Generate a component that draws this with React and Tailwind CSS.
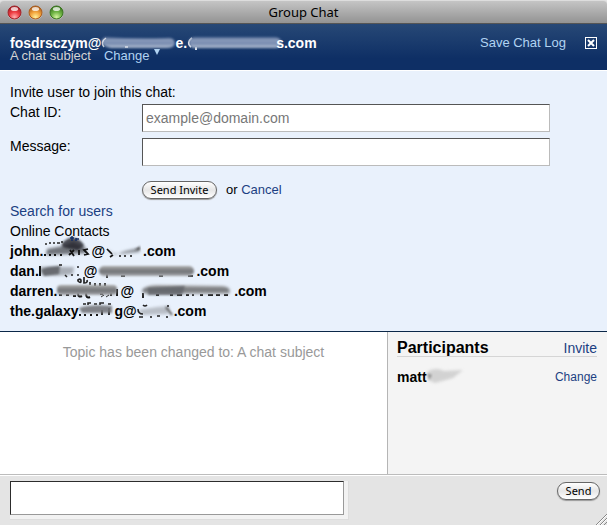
const sans = "font-['Liberation_Sans',Arial,sans-serif]";
const ui = "font-['Noto_Sans','Open_Sans',sans-serif]";

function Light({ id, dark, mid, pale }) {
  return (
    <svg className="size-[15px]" viewBox="0 0 15 15" aria-hidden="true">
      <defs>
        <radialGradient id={id} cx="50%" cy="85%" r="80%">
          <stop offset="0" stopColor={pale} />
          <stop offset="0.5" stopColor={mid} />
          <stop offset="1" stopColor={dark} />
        </radialGradient>
      </defs>
      <circle cx="7.5" cy="8" r="7" fill="#fff" opacity="0.35" />
      <circle cx="7.5" cy="7.5" r="6.5" fill={`url(#${id})`} stroke={dark} strokeWidth="1" />
      <ellipse cx="7.5" cy="4" rx="3.6" ry="2" fill="#fff" opacity="0.75" />
    </svg>
  );
}

function Smudge({ className, width, children }) {
  return (
    <svg className={`h-5 shrink-0 overflow-visible ${className}`} viewBox={`0 0 ${width} 20`} aria-hidden="true">
      {children}
    </svg>
  );
}

const pill =
  "shrink-0 rounded-full border border-[#666] bg-linear-to-b from-white via-[#e6e6e6] to-white text-[11px] leading-4 text-black shadow-[0_1px_1px_#999]";
const field =
  "min-w-0 flex-1 h-7 border border-t-[#555] border-l-[#555] border-r-[#bbb] border-b-[#bbb] bg-white px-[3px] text-sm outline-none placeholder:text-[#777]";

export default function App() {
  return (
    <div className={`flex min-h-screen w-full flex-col bg-[#e4e4e4] text-sm text-black ${sans}`}>
      <svg className="absolute size-0" aria-hidden="true">
        <defs>
          <filter id="soft" x="-20%" y="-40%" width="140%" height="180%"><feGaussianBlur stdDeviation="0.8" /></filter>
          <filter id="softer" x="-40%" y="-60%" width="180%" height="220%"><feGaussianBlur stdDeviation="1.8" /></filter>
          <linearGradient id="bar" x1="0" y1="0" x2="0" y2="1">
            <stop offset="0" stopColor="#aaa" />
            <stop offset="0.55" stopColor="#707276" />
            <stop offset="1" stopColor="#a7a9ac" />
          </linearGradient>
          <linearGradient id="bluebar" x1="0" y1="0" x2="0" y2="1">
            <stop offset="0" stopColor="#526b96" />
            <stop offset="0.3" stopColor="#8e9fbd" />
            <stop offset="0.55" stopColor="#7488ae" />
            <stop offset="1" stopColor="#b0bdd1" />
          </linearGradient>
        </defs>
      </svg>

      <header className="grid h-6 grid-cols-[1fr_auto_1fr] items-center rounded-t border-t border-b border-t-[#ddd] border-b-[#555] bg-linear-to-b from-[#c5c5c5] to-[#939393] px-[7px]">
        <div className="flex gap-[6px]">
          <Light id="red" dark="#a02027" mid="#ef3c42" pale="#ffb0b0" />
          <Light id="amber" dark="#a95c1d" mid="#f3a33b" pale="#fff09a" />
          <Light id="green" dark="#39741f" mid="#70b545" pale="#d6f5a0" />
        </div>
        <h1 className={`text-[13px] leading-5 ${ui}`}>Group Chat</h1>
      </header>

      <section className="flex h-[47px] items-start justify-between border-b border-white bg-linear-to-b from-[#274876] to-[#0e2f65] to-75% px-[10px] pt-[13px]">
        <div>
          <div className="flex h-3 items-center text-sm leading-3 font-bold text-white">
            <span>fosdrsczym@</span>
            <Smudge className="w-[74px]" width={74}>
              <path d="M4 4Q0 6 1 10Q3 14 10 15H65Q74 15 74 10Q73 4 65 5Q32 6 4 4Z" fill="url(#bluebar)" filter="url(#soft)" />
              <path d="M5 5Q-1 9 3 14M24 14h3" fill="none" stroke="#fff" strokeWidth="1.5" opacity="0.7" />
            </Smudge>
            <span>e.</span>
            <Smudge className="w-[89px]" width={89}>
              <path d="M5 5Q-1 10 4 14M9 14v3" fill="none" stroke="#fff" strokeWidth="1.8" />
              <rect x="2" y="4" width="92" height="11" rx="5.5" fill="url(#bluebar)" filter="url(#soft)" />
            </Smudge>
            <span>s.com</span>
          </div>
          <div className="flex h-4 gap-[13px] text-[13px] leading-[14px] text-[#d4d4d4]">
            <span>A chat subject</span>
            <button className="flex gap-1 text-[#b1d3f2]">
              Change
              <svg className="h-[7px] w-[6px]" viewBox="0 0 6 7" aria-hidden="true"><path d="M0 0h6L3 6z" fill="currentColor" /></svg>
            </button>
          </div>
        </div>
        <div className="flex items-center gap-[19px]">
          <a href="#save" className="text-[13px] leading-3 text-[#b1d3f2]">Save Chat Log</a>
          <button aria-label="Close chat">
            <svg className="size-3" viewBox="0 0 12 12" aria-hidden="true">
              <rect x="0.5" y="0.5" width="11" height="11" fill="none" stroke="#fff" />
              <path d="M3 3l6 6M9 3L3 9" stroke="#fff" strokeWidth="2" />
            </svg>
          </button>
        </div>
      </section>

      <section className="border-b border-[#0b2748] bg-[#e9f1fc] px-[10px] pt-[9px] pb-[10px]">
        <form onSubmit={(e) => e.preventDefault()}>
          <p className="leading-6">Invite user to join this chat:</p>
          <div className="mb-[6px] flex pr-[47px]">
            <label htmlFor="chat-id" className="w-[132px] leading-4">Chat ID:</label>
            <input id="chat-id" type="text" placeholder="example@domain.com" className={field} />
          </div>
          <div className="flex pr-[47px]">
            <label htmlFor="message" className="w-[132px] leading-4">Message:</label>
            <input id="message" type="text" className={field} />
          </div>
          <div className="mt-[15px] mb-[2px] flex h-[18px] items-center pl-[132px] text-[13px]">
            <button className={`w-[75px] ${pill} ${ui}`}>Send Invite</button>
            <span className="ml-[9px]">or&nbsp;</span>
            <a href="#cancel" className="text-[#1c3f82]">Cancel</a>
          </div>
        </form>
        <a href="#search" className="block leading-5 text-[#1c3f82]">Search for users</a>
        <h2 className="leading-5">Online Contacts</h2>
        <ul className="leading-5 font-bold">
          <li className="flex">
            <span>john.</span>
            <Smudge className="w-[48px]" width={48}>
              <path d="M4 8L20 5L30 1L42 6L44 12L30 13L3 14Z" fill="#71757b" filter="url(#softer)" />
              <path d="M19 2Q27-5 32-3Q40 0 41 5L35 9Q27 8 19 6Z" fill="#222429" filter="url(#soft)" opacity="0.8" />
              <path d="M2 3h2M6 2h2M10 2h2M14 2h3M18 1h2" stroke="#222" strokeWidth="1.5" />
              <path d="M29-5v5M27-3h4M33-3v3M33-2h3" fill="none" stroke="#142f66" strokeWidth="1.5" />
              <path d="M1 14h2M6 14h2M11 14h2M17 14h2M26 14l5-5M27 9l4 6M36 9v5M45 8l-4 1 4 4-4 1" fill="none" stroke="#111" strokeWidth="1.8" />
            </Smudge>
            <span>@</span>
            <Smudge className="w-[38px]" width={38}>
              <path d="M2 8L10 14L20 10L33 7L35 11L16 13L5 12Z" fill="#8d9299" filter="url(#softer)" />
              <path d="M2 8l5 5M5 16l3-2M14 15h2M19 15h2M25 15h2" stroke="#111" strokeWidth="1.7" />
              <path d="M30 9l5-4v4" fill="#444" filter="url(#soft)" />
            </Smudge>
            <span>.com</span>
          </li>
          <li className="flex">
            <span>dan.</span>
            <Smudge className="w-[45px]" width={45}>
              <path d="M1 6Q12 5 23 6L35 6L34 13Q22 16 3 14Z" fill="#a8adb5" filter="url(#softer)" />
              <path d="M1 5v10" stroke="#111" strokeWidth="2" />
              <path d="M2 9Q5 6 21 5L20 13L5 15Z" fill="#686b70" filter="url(#soft)" />
              <path d="M20 4h3M26 14l2 2M32 14h2M39 5v2M39 13v2" stroke="#222" strokeWidth="1.5" />
            </Smudge>
            <span>@</span>
            <Smudge className="w-[99px]" width={99}>
              <path d="M10 13v4M24 15h4M62 15h4M91 15h5" stroke="#111" strokeWidth="1.6" />
              <rect x="2" y="5" width="95" height="10" rx="5" fill="url(#bar)" filter="url(#soft)" />
            </Smudge>
            <span>.com</span>
          </li>
          <li className="flex">
            <span>darren.</span>
            <Smudge className="w-[63px]" width={63}>
              <path d="M2 14h3M9 14h3M16 15h3M21 12q0 5 4 3M29 12q0 6 4 4M43 13h3M54 12v3M60 8v7" fill="none" stroke="#111" strokeWidth="2" />
              <path d="M21-1q3-2 3 1t-3 0zM27-4v6q4 0 3-3M33 1v3M38 2v3M43 2v3M48 2v3" fill="none" stroke="#222" strokeWidth="1.7" />
              <rect x="0" y="4" width="60" height="10" rx="4" fill="url(#bar)" filter="url(#soft)" />
              <path d="M44 16l3-2M49 16l3-2" stroke="#333" strokeWidth="1" />
            </Smudge>
            <span>@</span>
            <Smudge className="w-[100px]" width={100}>
              <path d="M9 12v5M22 14h3M36 14h3M43 14h5M52 14h3M59 13v2M66 14h3M74 14h5M82 14h4M90 14h4" stroke="#111" strokeWidth="1.8" />
              <path d="M8 9Q12 4 24 4L88 5Q98 6 95 13H14Q8 13 8 9Z" fill="url(#bar)" filter="url(#softer)" />
              <path d="M14 7L51 5L48 14H14Z" fill="#606369" filter="url(#soft)" opacity="0.8" />
            </Smudge>
            <span>.com</span>
          </li>
          <li className="flex">
            <span>the.galaxy</span>
            <Smudge className="w-[36px]" width={36}>
              <path d="M5 3h3M10 4V2h3M16 3h3M22 4V2h4M30 3h3" fill="none" stroke="#222" strokeWidth="1.6" />
              <path d="M1 14h2M6 14h2M12 14h2M18 14h2M24 9v5M31 7v7" fill="none" stroke="#111" strokeWidth="1.8" />
              <path d="M1 7Q12 3 34 5V12H4Z" fill="#74777b" filter="url(#soft)" opacity="0.9" />
            </Smudge>
            <span>g@</span>
            <Smudge className="w-[37px]" width={37}>
              <path d="M1 9L20 6L32 5L31 13L6 14Z" fill="#989ca3" filter="url(#softer)" opacity="0.6" />
              <path d="M1 8q0 5 5 5M2 16h4M6 4q2 2 4 0M14 15v2M20 15h3M30 15v2M31 4v2" fill="none" stroke="#222" strokeWidth="1.6" />
              <path d="M29 6L35 14" stroke="#555" strokeWidth="2" filter="url(#soft)" />
            </Smudge>
            <span>.com</span>
          </li>
        </ul>
      </section>

      <main className="flex flex-1 border-b border-[#bcbcbc] bg-white">
        <section className="flex-1 px-3 pt-[10px] text-center leading-5 text-[#999]">
          Topic has been changed to: A chat subject
        </section>
        <aside className="w-[220px] border-l border-[#b5b5b5] bg-[#f4f4f4] px-[9px] pt-2 pr-[10px]">
          <div className="flex h-[17px] items-center justify-between border-b border-[#d5d5d5]">
            <h2 className="text-base leading-4 font-bold">Participants</h2>
            <a href="#invite" className="leading-4 text-[#1c3f82]">Invite</a>
          </div>
          <div className="mt-[10px] flex items-center leading-5">
            <strong>matt</strong>
            <Smudge className="w-10" width={40}>
              <path d="M1 4Q10 0 17 4L36 3L26 11L8 16L1 13Z" fill="#c4c4c4" filter="url(#softer)" opacity="0.7" />
              <path d="M0 6L5 8L2 13Z" fill="#555" filter="url(#soft)" opacity="0.5" />
            </Smudge>
            <a href="#change" className="ml-auto text-xs leading-5 text-[#1c3f82]">Change</a>
          </div>
        </aside>
      </main>

      <form onSubmit={(e) => e.preventDefault()} className="relative flex h-[50px] items-start justify-between border-t border-white pt-[5px] pr-[7px] pl-[10px]">
        <div className="mr-[208px] flex flex-1 border-r border-b border-[#ddd] bg-[#f2f2f2] pr-1 pb-1">
          <input aria-label="Chat message" type="text" className="h-[34px] min-w-0 flex-1 border border-t-[#2c2c2c] border-r-[#999] border-b-[#999] border-l-[#2c2c2c] bg-white px-1 outline-none" />
        </div>
        <button className={`mt-px w-[43px] ${pill} ${ui}`}>Send</button>
        <svg className="absolute right-0 bottom-0 size-3" viewBox="0 0 12 12" aria-hidden="true">
          <path d="M1 12L12 1M5 12l7-7M9 12l3-3" stroke="#888" fill="none" />
          <path d="M2 12L12 2M6 12l6-6" stroke="#fff" fill="none" />
        </svg>
      </form>
    </div>
  );
}
